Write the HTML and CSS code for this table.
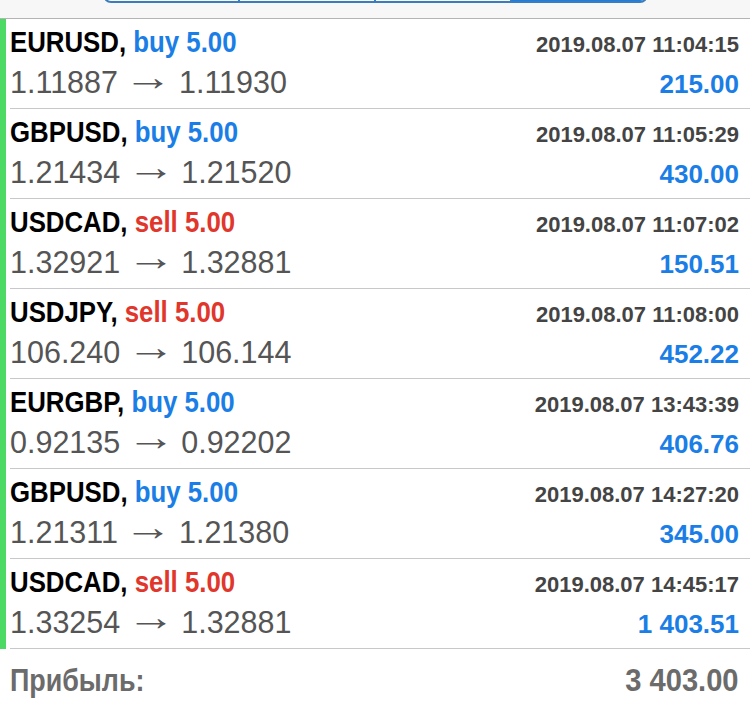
FILE: index.html
```html
<!DOCTYPE html>
<html lang="ru">
<head>
<meta charset="utf-8">
<title>История сделок</title>
<link rel="stylesheet" href="styles.css">
</head>
<body>
<div class="header">
  <div class="segmented">
    <span class="seg"></span><span class="seg"></span><span class="seg"></span><span class="seg active"></span>
  </div>
</div>
<div class="list">
  <div class="trade">
    <div class="bar"></div>
    <div class="body">
      <div class="line top"><span class="deal"><b class="sym">EURUSD,</b> <b class="buy">buy 5.00</b></span><span class="time">2019.08.07 11:04:15</span></div>
      <div class="line bottom"><span class="price">1.11887 <span class="arrow">→</span> 1.11930</span><span class="profit">215.00</span></div>
    </div>
  </div>
  <div class="trade">
    <div class="bar"></div>
    <div class="body">
      <div class="line top"><span class="deal"><b class="sym">GBPUSD,</b> <b class="buy">buy 5.00</b></span><span class="time">2019.08.07 11:05:29</span></div>
      <div class="line bottom"><span class="price">1.21434 <span class="arrow">→</span> 1.21520</span><span class="profit">430.00</span></div>
    </div>
  </div>
  <div class="trade">
    <div class="bar"></div>
    <div class="body">
      <div class="line top"><span class="deal"><b class="sym">USDCAD,</b> <b class="sell">sell 5.00</b></span><span class="time">2019.08.07 11:07:02</span></div>
      <div class="line bottom"><span class="price">1.32921 <span class="arrow">→</span> 1.32881</span><span class="profit">150.51</span></div>
    </div>
  </div>
  <div class="trade">
    <div class="bar"></div>
    <div class="body">
      <div class="line top"><span class="deal"><b class="sym">USDJPY,</b> <b class="sell">sell 5.00</b></span><span class="time">2019.08.07 11:08:00</span></div>
      <div class="line bottom"><span class="price">106.240 <span class="arrow">→</span> 106.144</span><span class="profit">452.22</span></div>
    </div>
  </div>
  <div class="trade">
    <div class="bar"></div>
    <div class="body">
      <div class="line top"><span class="deal"><b class="sym">EURGBP,</b> <b class="buy">buy 5.00</b></span><span class="time">2019.08.07 13:43:39</span></div>
      <div class="line bottom"><span class="price">0.92135 <span class="arrow">→</span> 0.92202</span><span class="profit">406.76</span></div>
    </div>
  </div>
  <div class="trade">
    <div class="bar"></div>
    <div class="body">
      <div class="line top"><span class="deal"><b class="sym">GBPUSD,</b> <b class="buy">buy 5.00</b></span><span class="time">2019.08.07 14:27:20</span></div>
      <div class="line bottom"><span class="price">1.21311 <span class="arrow">→</span> 1.21380</span><span class="profit">345.00</span></div>
    </div>
  </div>
  <div class="trade">
    <div class="bar"></div>
    <div class="body">
      <div class="line top"><span class="deal"><b class="sym">USDCAD,</b> <b class="sell">sell 5.00</b></span><span class="time">2019.08.07 14:45:17</span></div>
      <div class="line bottom"><span class="price">1.33254 <span class="arrow">→</span> 1.32881</span><span class="profit">1 403.51</span></div>
    </div>
  </div>
</div>
<div class="total">
  <span class="total-label">Прибыль:</span>
  <span class="total-value">3 403.00</span>
</div>
</body>
</html>
```
FILE: styles.css
```css
html, body {
  margin: 0;
  padding: 0;
  background: #ffffff;
  font-family: "Liberation Sans", Arial, sans-serif;
  width: 750px;
  height: 703px;
  overflow: hidden;
}

.header {
  height: 18px;
  background: #f7f7f7;
  border-bottom: 1px solid #b4b4b4;
  overflow: hidden;
}

.segmented {
  width: 545px;
  height: 30px;
  margin: -27px auto 0;
  display: flex;
  border: 2px solid #3a7cbc;
  border-radius: 8px;
  overflow: hidden;
  box-sizing: border-box;
}

.seg {
  flex: 1;
  border-left: 2px solid #3a7cbc;
}

.seg:first-child {
  border-left: none;
}

.seg.active {
  background: #1a7ee6;
}

.trade {
  display: flex;
  height: 90px;
}

.bar {
  width: 6px;
  background: #4cd964;
  flex: none;
}

.body {
  flex: 1;
  margin-left: 4px;
  padding: 3px 11px 0 0;
  border-bottom: 1px solid #c8c7cc;
  box-sizing: border-box;
}

.line {
  display: flex;
  justify-content: space-between;
  align-items: baseline;
  height: 40px;
  line-height: 40px;
}

.deal {
  display: inline-block;
  font-weight: bold;
  font-size: 30px;
  white-space: nowrap;
  transform: scaleX(0.86);
  transform-origin: 0 50%;
}

.sym {
  color: #000000;
}

.buy {
  color: #1a7ee6;
}

.sell {
  color: #e0362c;
}

.time {
  font-size: 22px;
  font-weight: bold;
  color: #444444;
}

.price {
  font-size: 30.5px;
  color: #555555;
  white-space: nowrap;
}

.arrow {
  display: inline-block;
  width: 44px;
  text-align: center;
  transform: translateY(-6px) scale(1.6, 1.25);
}

.profit {
  font-size: 26px;
  font-weight: bold;
  color: #1a7ee6;
}

.total {
  display: flex;
  justify-content: space-between;
  align-items: baseline;
  padding: 11px 11px 0 10px;
  font-weight: bold;
  font-size: 32px;
  line-height: 40px;
  color: #6b6b6b;
}

.total-label {
  display: inline-block;
  transform: scaleX(0.84);
  transform-origin: 0 50%;
}

.total-value {
  display: inline-block;
  transform: scaleX(0.91);
  transform-origin: 100% 50%;
}
```
